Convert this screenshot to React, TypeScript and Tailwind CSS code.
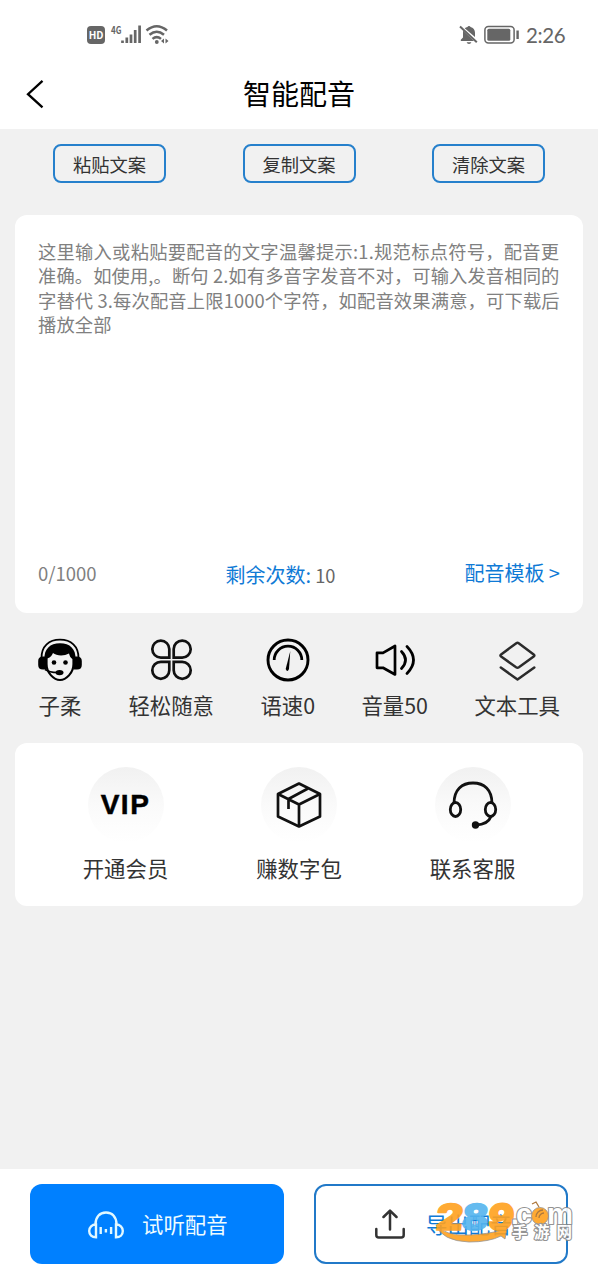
import type { ReactNode } from 'react'

const hintLines = [
  { text: '这里输入或粘贴要配音的文字温馨提示:1.规范标点符号，配音更', tracking: 'tracking-[0.25px]' },
  { text: '准确。如使用,。断句 2.如有多音字发音不对，可输入发音相同的', tracking: 'tracking-[0.11px]' },
  { text: '字替代 3.每次配音上限1000个字符，如配音效果满意，可下载后', tracking: 'tracking-[0.15px]' },
  { text: '播放全部', tracking: 'tracking-[0.1px]' },
]

function StatusBar() {
  return (
    <div className="h-[58px] flex items-center justify-between pt-[11px] pl-[87px] pr-[32px] text-[#666]">
      <div className="flex items-center">
        <div className="w-[18px] h-[18px] rounded-[4px] bg-[#666] text-white text-[10px] font-bold flex items-center justify-center">
          HD
        </div>
        <svg className="ml-[5px] overflow-visible" width="60" height="22" viewBox="0 0 60 22" fill="none">
          <text x="1" y="9.500" fontSize="10.500" fontWeight="bold" fill="#666" textLength="10.500" lengthAdjust="spacingAndGlyphs">4G</text>
          <g stroke="#666" strokeWidth="2.700">
            <path d="M12.500 19v-2.500M16.800 19v-5.500M21 19V10.500M25.200 19V6M29.600 19V1.500" />
          </g>
          <g stroke="#666" strokeWidth="2.500">
            <path d="M36.500 6.500q10.200-8.600 20.500 0M39.500 10.800q7.200-6.200 14.500 0M42.500 14.900q4.200-3.600 8.500 0" />
          </g>
          <circle cx="46.800" cy="18" r="1.900" fill="#666" />
          <path d="M54 14.500v5l-3-2.500zM55.500 14.500v5l3-2.500z" fill="#666" />
        </svg>
      </div>
      <div className="flex items-center">
        <svg width="20" height="20" viewBox="0 0 20 20" fill="none">
          <path d="M10 .9a1.500 1.500 0 0 1 1.500 1.200c2.800.6 4.500 2.800 4.500 5.700V12L5.700 3.300c.8-.6 1.700-1 2.800-1.200A1.500 1.500 0 0 1 10 .9zM4 5.600 15 16H1.800v-1.200L4 12.500z" fill="#666" />
          <path d="M7.600 17.200h4.800a2.500 2.500 0 0 1-4.800 0z" fill="#666" />
          <path d="M1 1.500l16.800 15.800" stroke="#666" strokeWidth="2" />
        </svg>
        <svg className="ml-[5px]" width="36" height="20" viewBox="0 0 36 20" fill="none">
          <rect x=".9" y="1.400" width="29.200" height="16.700" rx="3.500" stroke="#666" strokeWidth="1.500" />
          <rect x="3.300" y="3.800" width="23" height="12" rx="1.500" fill="#666" />
          <path d="M33.600 5.500v8.500" stroke="#666" strokeWidth="2.400" />
        </svg>
        <span className="ml-[6px] mt-[2px] w-[40px] text-[20.500px] leading-none tracking-[-0.4px] whitespace-nowrap font-['Lato',sans-serif]">2:26</span>
      </div>
    </div>
  )
}

function Header() {
  return (
    <div className="h-[71px] grid grid-cols-[1fr_auto_1fr] items-center pb-[2px]">
      <svg className="ml-[26px] mt-[2px]" width="20" height="30" viewBox="0 0 20 30" fill="none">
        <path d="M16.500 1.800 2 15.200l14.500 13.200" stroke="#000" strokeWidth="2.300" />
      </svg>
      <h1 className="text-[28px] leading-none text-black">智能配音</h1>
    </div>
  )
}

function OutlineButton({ label }: { label: string }) {
  return (
    <button className="w-[113px] h-[39px] rounded-[8px] border-2 border-[#2680cc] pt-[2px] text-[18.300px] leading-[33px] text-[#333]">
      {label}
    </button>
  )
}

function AgentIcon() {
  return (
    <svg width="44" height="44" viewBox="0 0 44 44" fill="none">
      <path d="M3.500 20C3.500 8 11 1.700 22 1.700S40.500 8 40.500 20" stroke="#000" strokeWidth="1.800" />
      <path d="M8.500 20v6c0 9 7.500 16 13.500 16s13.500-7 13.500-16v-6" fill="#f2f2f2" stroke="#000" strokeWidth="2.200" />
      <path d="M6.500 21C6 11 12 5.200 22 5.200S38 11 37.500 21h-3c-2-1-3-3.500-3.500-5.500-5 2.800-12.500 2.500-16-.5-1.300 3-3 5-7.500 6z" fill="#000" />
      <path d="M8.500 18.500v13H5q-4.800 0-4.800-4.500v-4q0-4.500 4.800-4.500zM35.500 18.500v13H39q4.800 0 4.800-4.500v-4q0-4.500-4.800-4.500z" fill="#000" />
      <circle cx="16" cy="24.500" r="2.300" fill="#000" />
      <circle cx="27.500" cy="24.500" r="2.300" fill="#000" />
      <path d="M7 31.500q5 3.200 13 3" stroke="#000" strokeWidth="1.500" />
      <ellipse cx="21.500" cy="34.600" rx="4" ry="2.700" fill="#000" />
    </svg>
  )
}

function CloverIcon() {
  return (
    <svg width="44" height="44" viewBox="0 0 44 44" fill="none" stroke="#111" strokeWidth="2.700">
      <path d="M20.300 19.600h-8.500a8.500 8.500 0 1 1 8.500-8.500z" />
      <path d="M24.700 19.600h8.300a8.500 8.500 0 1 0-8.300-8.500z" />
      <path d="M20.300 23.800h-8.500a8.500 8.500 0 1 0 8.500 8.500z" />
      <path d="M24.700 23.800h8.300a8.500 8.500 0 1 1-8.300 8.500z" />
    </svg>
  )
}

function SpeedIcon() {
  return (
    <svg width="44" height="44" viewBox="0 0 44 44" fill="none" stroke="#000">
      <circle cx="22" cy="22" r="20" strokeWidth="2.900" />
      <path d="M8.200 22a13.800 13.800 0 0 1 27.600 0" strokeWidth="2.800" />
      <path d="M24.300 13 23 31q-1.700 4-3.300 0z" fill="#000" stroke="none" />
    </svg>
  )
}

function VolumeIcon() {
  return (
    <svg width="44" height="44" viewBox="0 0 44 44" fill="none" stroke="#000" strokeWidth="2.700" strokeLinecap="round" strokeLinejoin="round">
      <path d="M4 14.800h6L22 8v28.500L10 29.800H4z" />
      <path d="M28.500 13.500q8 8.500 0 17M34 8.500q13 13.500 0 27" />
    </svg>
  )
}

function LayersIcon() {
  return (
    <svg width="44" height="44" viewBox="0 0 44 44" fill="none" stroke="#2b2b2b" strokeWidth="2.500" strokeLinecap="round" strokeLinejoin="round">
      <path d="M21.300 5.200q1.200-.9 2.400 0l15 11.200q1.400 1.100 0 2.200L23.900 29.200q-1.400.9-2.800 0L6.100 18.600q-1.400-1.100 0-2.200z" />
      <path d="M5.800 29.500l16.700 12L39.300 29.500" />
    </svg>
  )
}

function Tool({ icon, label }: { icon: ReactNode; label: string }) {
  return (
    <div className="flex flex-col items-center">
      {icon}
      <span className="mt-[8px] mb-px text-[21.400px] leading-[30px] whitespace-nowrap text-[#333]">{label}</span>
    </div>
  )
}

function Service({ icon, label }: { icon: ReactNode; label: string }) {
  return (
    <div className="w-[173.500px] flex flex-col items-center">
      <div className="size-[76px] rounded-full bg-linear-to-b from-[#f1f1f1] via-[#fafafa] to-white flex items-center justify-center">
        {icon}
      </div>
      <span className="mt-[9px] text-[21.400px] leading-[31px] text-[#333]">{label}</span>
    </div>
  )
}

function BoxIcon() {
  return (
    <svg width="46" height="46" viewBox="0 0 46 46" fill="none" stroke="#111" strokeWidth="2.700" strokeLinejoin="round">
      <path d="M23 1.500 44 12v22.500L23 44.500 2 34.500V12z" />
      <path d="M2 12l21 10.500L44 12M23 22.500V45M32 6.500 12.500 17v10" />
    </svg>
  )
}

function HeadsetIcon() {
  return (
    <svg width="50" height="50" viewBox="0 0 50 50" fill="none" stroke="#111" strokeWidth="2.800">
      <path d="M6 23.500C6 9.500 14 3 25 3s19 6.500 19 20.500" />
      <ellipse cx="7.500" cy="29.500" rx="5.200" ry="7" />
      <ellipse cx="42.500" cy="29.500" rx="5.200" ry="7" />
      <path d="M43 36.500q-3 8-15 8.500" />
      <circle cx="27.500" cy="45" r="3.700" fill="#111" stroke="none" />
    </svg>
  )
}

function ListenIcon() {
  return (
    <svg width="36" height="28" viewBox="0 0 36 28" fill="none" stroke="#e2f8ff" strokeWidth="2.400">
      <path d="M7.500 13.500C7.500 6 11.500 1.500 18 1.500S28.500 6 28.500 13.500" />
      <path d="M8 13.500v12.800c-4 0-6.800-2.600-6.800-6.400S4 13.500 8 13.500zM28 13.500v12.800c4 0 6.800-2.600 6.800-6.400S32 13.500 28 13.500z" />
      <path d="M12.700 16v7M17.900 18v3.500M23.100 16v7" />
    </svg>
  )
}

function UploadIcon() {
  return (
    <svg width="30" height="30" viewBox="0 0 30 30" fill="none" stroke="#333" strokeWidth="2.500" strokeLinecap="round" strokeLinejoin="round">
      <path d="M15 20.500V2M8.500 8 15 1.600 21.500 8" />
      <path d="M1.300 20v6q0 2.500 2.500 2.500h22.400q2.500 0 2.500-2.500v-6" />
    </svg>
  )
}

function Watermark() {
  return (
    <svg className="absolute left-[119px] top-[14px] overflow-visible opacity-90" width="144" height="46" viewBox="0 0 144 46" fill="none" fontFamily="'Noto Sans CJK SC', sans-serif">
      <path d="M1 25q9 11 33 10 20-1 33-5l-1-2 6 1-2 10-4-3q-12 6-32 6Q7 41 1 25z" fill="#ffa11f" stroke="#8b8b8b" strokeWidth=".8" />
      <g fontFamily="Inter, sans-serif" fontSize="36" fontWeight="900" strokeWidth="1.600" strokeLinejoin="round">
        <g transform="translate(0 30) skewX(-6)">
          <text x="0" y="0" fill="#ffa11f" stroke="#ffa11f" textLength="27" lengthAdjust="spacingAndGlyphs">2</text>
          <text x="26" y="0" fill="#55b4ee" stroke="#55b4ee" textLength="26" lengthAdjust="spacingAndGlyphs">8</text>
          <text x="52" y="0" fill="#ffa11f" stroke="#ffa11f" textLength="26" lengthAdjust="spacingAndGlyphs">9</text>
        </g>
      </g>
      <g fontFamily="'Liberation Sans', sans-serif" fontWeight="bold" stroke="#888" strokeWidth="2.200" strokeLinejoin="round" paintOrder="stroke" fill="#fff" fontSize="29">
        <text x="76" y="24">.</text>
        <text x="81" y="24" textLength="16" lengthAdjust="spacingAndGlyphs">c</text>
        <text x="112" y="24" textLength="26" lengthAdjust="spacingAndGlyphs">m</text>
      </g>
      <circle cx="105" cy="16" r="8.500" fill="#ffa11f" stroke="#888" strokeWidth=".8" />
      <path d="M97 4l4-2 3 5M101 17a7 7 0 0 1 7-7M104 18a5 5 0 0 1 5-5" stroke="#a56b2a" strokeWidth="1.300" />
      <g fontSize="15.500" fontWeight="bold" stroke="#888" strokeWidth="2.200" strokeLinejoin="round" paintOrder="stroke" fill="#fff">
        <text x="77" y="38">手</text>
        <text x="99" y="38">游</text>
        <text x="121.500" y="38">网</text>
      </g>
    </svg>
  )
}

export default function App() {
  return (
    <div className="w-[598px] h-[1279px] flex flex-col bg-[#f1f1f1] font-['Noto_Sans_CJK_SC',sans-serif]">
      <header className="bg-white">
        <StatusBar />
        <Header />
      </header>

      <main className="flex-1 px-[15px]">
        <div className="flex justify-between px-[38px] pt-[15px]">
          <OutlineButton label="粘贴文案" />
          <OutlineButton label="复制文案" />
          <OutlineButton label="清除文案" />
        </div>

        <section className="mt-[32px] h-[398px] rounded-[12px] bg-white px-[23px] pt-[24px] pb-[23px] flex flex-col justify-between">
          <div className="text-[18.300px] leading-[24.300px] text-[#808080] whitespace-nowrap">
            {hintLines.map(line => <div key={line.text} className={line.tracking}>{line.text}</div>)}
          </div>
          <div className="flex items-center justify-between leading-[30px]">
            <span className="text-[18.500px] text-[#808080]">0/1000</span>
            <span className="text-[18.300px] text-[#666] pt-[4px]">
              <span className="text-[20px] text-[#0f7ad6]">剩余次数:</span> 10
            </span>
            <span className="text-[20px] text-[#0f7ad6]">配音模板 &gt;</span>
          </div>
        </section>

        <section className="mt-[25px] flex justify-between px-[23px]">
          <Tool icon={<AgentIcon />} label="子柔" />
          <Tool icon={<CloverIcon />} label="轻松随意" />
          <Tool icon={<SpeedIcon />} label="语速0" />
          <Tool icon={<VolumeIcon />} label="音量50" />
          <Tool icon={<LayersIcon />} label="文本工具" />
        </section>

        <section className="mt-[22px] h-[163px] rounded-[12px] bg-white pt-[24px] flex justify-center">
          <Service
            icon={<span className="font-['Liberation_Sans',sans-serif] font-bold text-[28px] leading-none tracking-[1.500px] text-black [-webkit-text-stroke:0.5px_black]">VIP</span>}
            label="开通会员"
          />
          <Service icon={<BoxIcon />} label="赚数字包" />
          <Service icon={<HeadsetIcon />} label="联系客服" />
        </section>
      </main>

      <footer className="h-[110px] bg-white px-[30px] pt-[15px] flex justify-between items-start">
        <button className="w-[254px] h-[80px] rounded-[12px] bg-[#0080ff] flex items-center pt-px pl-[58px] text-[21.400px] text-[#effcff]">
          <ListenIcon />
          <span className="ml-[18px]">试听配音</span>
        </button>
        <button className="relative w-[254px] h-[80px] rounded-[12px] border-2 border-[#2179c8] flex items-center pl-[59px] text-[21.400px] text-[#0f7ad6]">
          <UploadIcon />
          <span className="ml-[21px]">导出配音</span>
          <Watermark />
        </button>
      </footer>
    </div>
  )
}
